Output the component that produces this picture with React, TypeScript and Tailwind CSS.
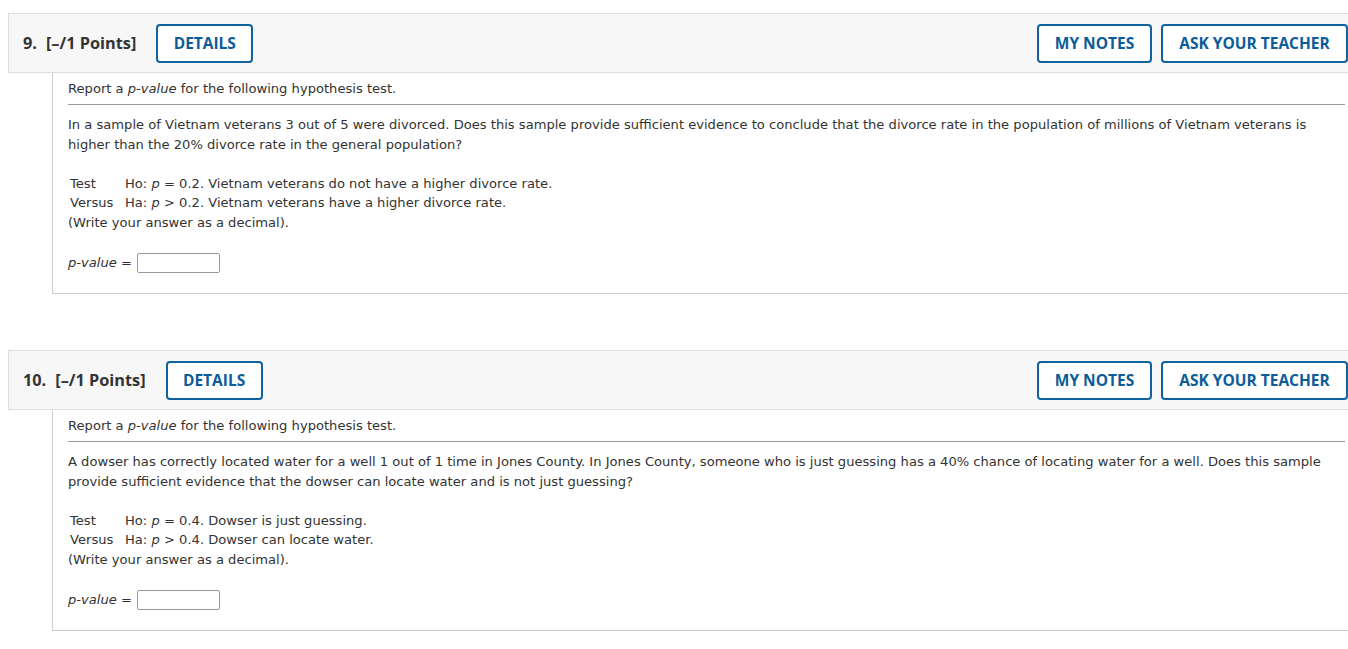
import React from 'react';

type Question = {
  num: string;
  intro: string;
  ho: string;
  ha: string;
  p0: string;
};

const QUESTIONS: Question[] = [
  {
    num: '9.',
    intro:
      'In a sample of Vietnam veterans 3 out of 5 were divorced. Does this sample provide sufficient evidence to conclude that the divorce rate in the population of millions of Vietnam veterans is higher than the 20% divorce rate in the general population?',
    p0: '0.2',
    ho: 'Vietnam veterans do not have a higher divorce rate.',
    ha: 'Vietnam veterans have a higher divorce rate.',
  },
  {
    num: '10.',
    intro:
      'A dowser has correctly located water for a well 1 out of 1 time in Jones County. In Jones County, someone who is just guessing has a 40% chance of locating water for a well. Does this sample provide sufficient evidence that the dowser can locate water and is not just guessing?',
    p0: '0.4',
    ho: 'Dowser is just guessing.',
    ha: 'Dowser can locate water.',
  },
];

function HeaderButton({ label, className = '' }: { label: string; className?: string }) {
  return (
    <button
      type="button"
      className={`h-[39px] rounded-[4px] border-2 border-[#0e62a0] bg-white px-[15px] pt-[1px] text-[15.5px] font-bold text-[#0b5c98] ${className}`}
      style={{ fontFamily: '"Open Sans", sans-serif' }}
    >
      {label}
    </button>
  );
}

function QuestionBlock({ q }: { q: Question }) {
  return (
    <div>
      <div className="flex h-[60px] w-[calc(100%+20px)] items-center border border-r-0 border-[#dddddd] bg-[#f7f7f7] pl-[14px]">
        <span
          className="pt-[1px] text-[16.3px] font-bold text-[#333]"
          style={{ fontFamily: '"Open Sans", sans-serif' }}
        >
          {q.num}
          <span className="ml-[9px]">[–/1 Points]</span>
        </span>
        <HeaderButton label="DETAILS" className="ml-[20px] w-[97px]" />
        <div className="ml-auto flex gap-[9px] pr-[20px]">
          <HeaderButton label="MY NOTES" className="w-[115px]" />
          <HeaderButton label="ASK YOUR TEACHER" className="w-[187px]" />
        </div>
      </div>
      <div
        className="ml-[44px] border-b border-l border-[#cccccc] pb-[20px] pl-[15px] pr-[3px] pt-[6px] text-[13.1px] leading-[20px] text-[#333]"
        style={{ fontFamily: '"DejaVu Sans", Verdana, sans-serif' }}
      >
        <p>
          Report a <i>p-value</i> for the following hypothesis test.
        </p>
        <hr className="mt-[5px] border-t border-[#999]" />
        <p className="mt-[10px]">{q.intro}</p>
        <table className="mt-[19px] border-collapse">
          <tbody>
            <tr className="leading-[19px]">
              <td className="w-[57px] pl-[2px]">Test</td>
              <td>
                Ho: <i>p</i> = {q.p0}. {q.ho}
              </td>
            </tr>
            <tr className="leading-[19px]">
              <td className="pl-[2px]">Versus</td>
              <td>
                Ha: <i>p</i> &gt; {q.p0}. {q.ha}
              </td>
            </tr>
          </tbody>
        </table>
        <p className="mt-[1px]">(Write your answer as a decimal).</p>
        <div className="mt-[20px] flex items-center">
          <span>
            <i>p-value</i> =
          </span>
          <input
            type="text"
            className="ml-[5px] h-[20px] w-[83px] rounded-[2px] border border-[#999] bg-white"
          />
        </div>
      </div>
    </div>
  );
}

export default function App() {
  return (
    <div className="min-h-[649px] overflow-hidden bg-white pl-2 pt-[13px]">
      <div className="flex flex-col gap-[56px]">
        {QUESTIONS.map((q) => (
          <QuestionBlock key={q.num} q={q} />
        ))}
      </div>
    </div>
  );
}
